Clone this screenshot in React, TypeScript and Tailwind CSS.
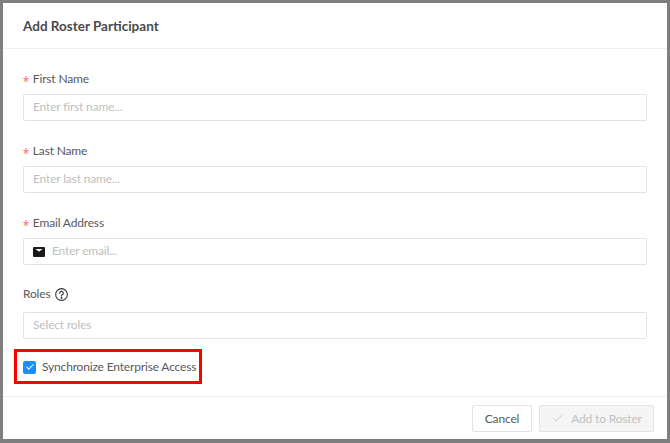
import React from 'react';
import { Check } from 'lucide-react';

const font = "font-['Lato','Noto_Sans',sans-serif]";

const Label = ({ text, required }: { text: string; required?: boolean }) => (
  <div className="flex h-[18px] items-center pb-[2px] text-[12px] tracking-[-0.17px] text-[#595959]">
    {required && <span className="mr-[4px] pt-[5px] font-['Roboto'] text-[14px] leading-[14px] text-[#ff7875]">*</span>}
    {text}
  </div>
);

const Field = ({ placeholder, icon }: { placeholder: string; icon?: boolean }) => (
  <div className="mt-[5px] flex h-[27px] items-center rounded-[2px] border border-[#e3e3e3] bg-white pb-[2px] pl-[9px] text-[12px] tracking-[-0.17px] text-[#bfbfbf]">
    {icon && (
      <svg width="12" height="10" viewBox="0 0 12 10" className="mr-[7px] mt-[2px]">
        <path d="M0 1a1 1 0 0 1 1-1h10a1 1 0 0 1 1 1v8a1 1 0 0 1-1 1H1a1 1 0 0 1-1-1z" fill="#1a1a1a" />
        <path d="M2.5 2h7L6 4.8z" fill="#fff" />
      </svg>
    )}
    {placeholder}
  </div>
);

export default function App() {
  return (
    <div className={`${font} h-[443px] w-[670px] overflow-hidden bg-[#7f7f7f] pl-[3px] pt-[3px]`}>
      <div className="flex h-[436px] w-[664px] flex-col bg-white">
        <div className="flex h-[46px] items-center border-b border-[#f0f0f0] pl-[20px] pt-[1px] text-[13.5px] font-bold text-[#4a4a4a]">
          Add Roster Participant
        </div>
        <div className="flex-1 px-[20px] pt-[22px]">
          <Label text="First Name" required />
          <Field placeholder="Enter first name..." />
          <div className="mt-[22px]">
            <Label text="Last Name" required />
            <Field placeholder="Enter last name..." />
          </div>
          <div className="mt-[22px]">
            <Label text="Email Address" required />
            <Field placeholder="Enter email..." icon />
          </div>
          <div className="mt-[20px]">
            <div className="flex h-[18px] items-center gap-[5px] text-[12px] tracking-[-0.17px] text-[#595959]">
              Roles
              <svg width="13" height="13" viewBox="0 0 12 12" fill="none" stroke="#333333">
                <circle cx="6" cy="6" r="5.4" />
                <path d="M4.3 4.8a1.7 1.7 0 1 1 2.5 1.5c-.5.3-.8.6-.8 1.1" strokeLinecap="round" />
                <circle cx="6" cy="9" r=".4" fill="#333333" />
              </svg>
            </div>
            <div className="pt-[4px]">
              <Field placeholder="Select roles" />
            </div>
          </div>
          <div className="-ml-[9px] mt-[10px] flex h-[35px] w-[188px] items-center border-[3px] border-[#ff0000] pl-[6px] pt-[1px]">
            <span className="flex h-[13px] w-[13px] shrink-0 items-center justify-center rounded-[2px] bg-[#1890ff]">
              <Check size={10} strokeWidth={2.5} color="#fff" />
            </span>
            <span className="ml-[6px] whitespace-nowrap text-[12px] tracking-[-0.17px] text-[#595959]">Synchronize Enterprise Access</span>
          </div>
        </div>
        <div className="flex h-[43px] items-start justify-end gap-[7px] border-t border-[#f0f0f0] pr-[13px] pt-[8px] text-[12px] tracking-[-0.17px]">
          <button className="h-[27px] w-[60px] rounded-[2px] border border-[#e3e3e3] bg-white text-[#595959]">Cancel</button>
          <button className="flex h-[27px] w-[115px] items-center justify-center gap-[7px] rounded-[2px] border border-[#e3e3e3] bg-[#f5f5f5] text-[#bfbfbf]">
            <Check size={13} strokeWidth={1.5} />
            Add to Roster
          </button>
        </div>
      </div>
    </div>
  );
}
